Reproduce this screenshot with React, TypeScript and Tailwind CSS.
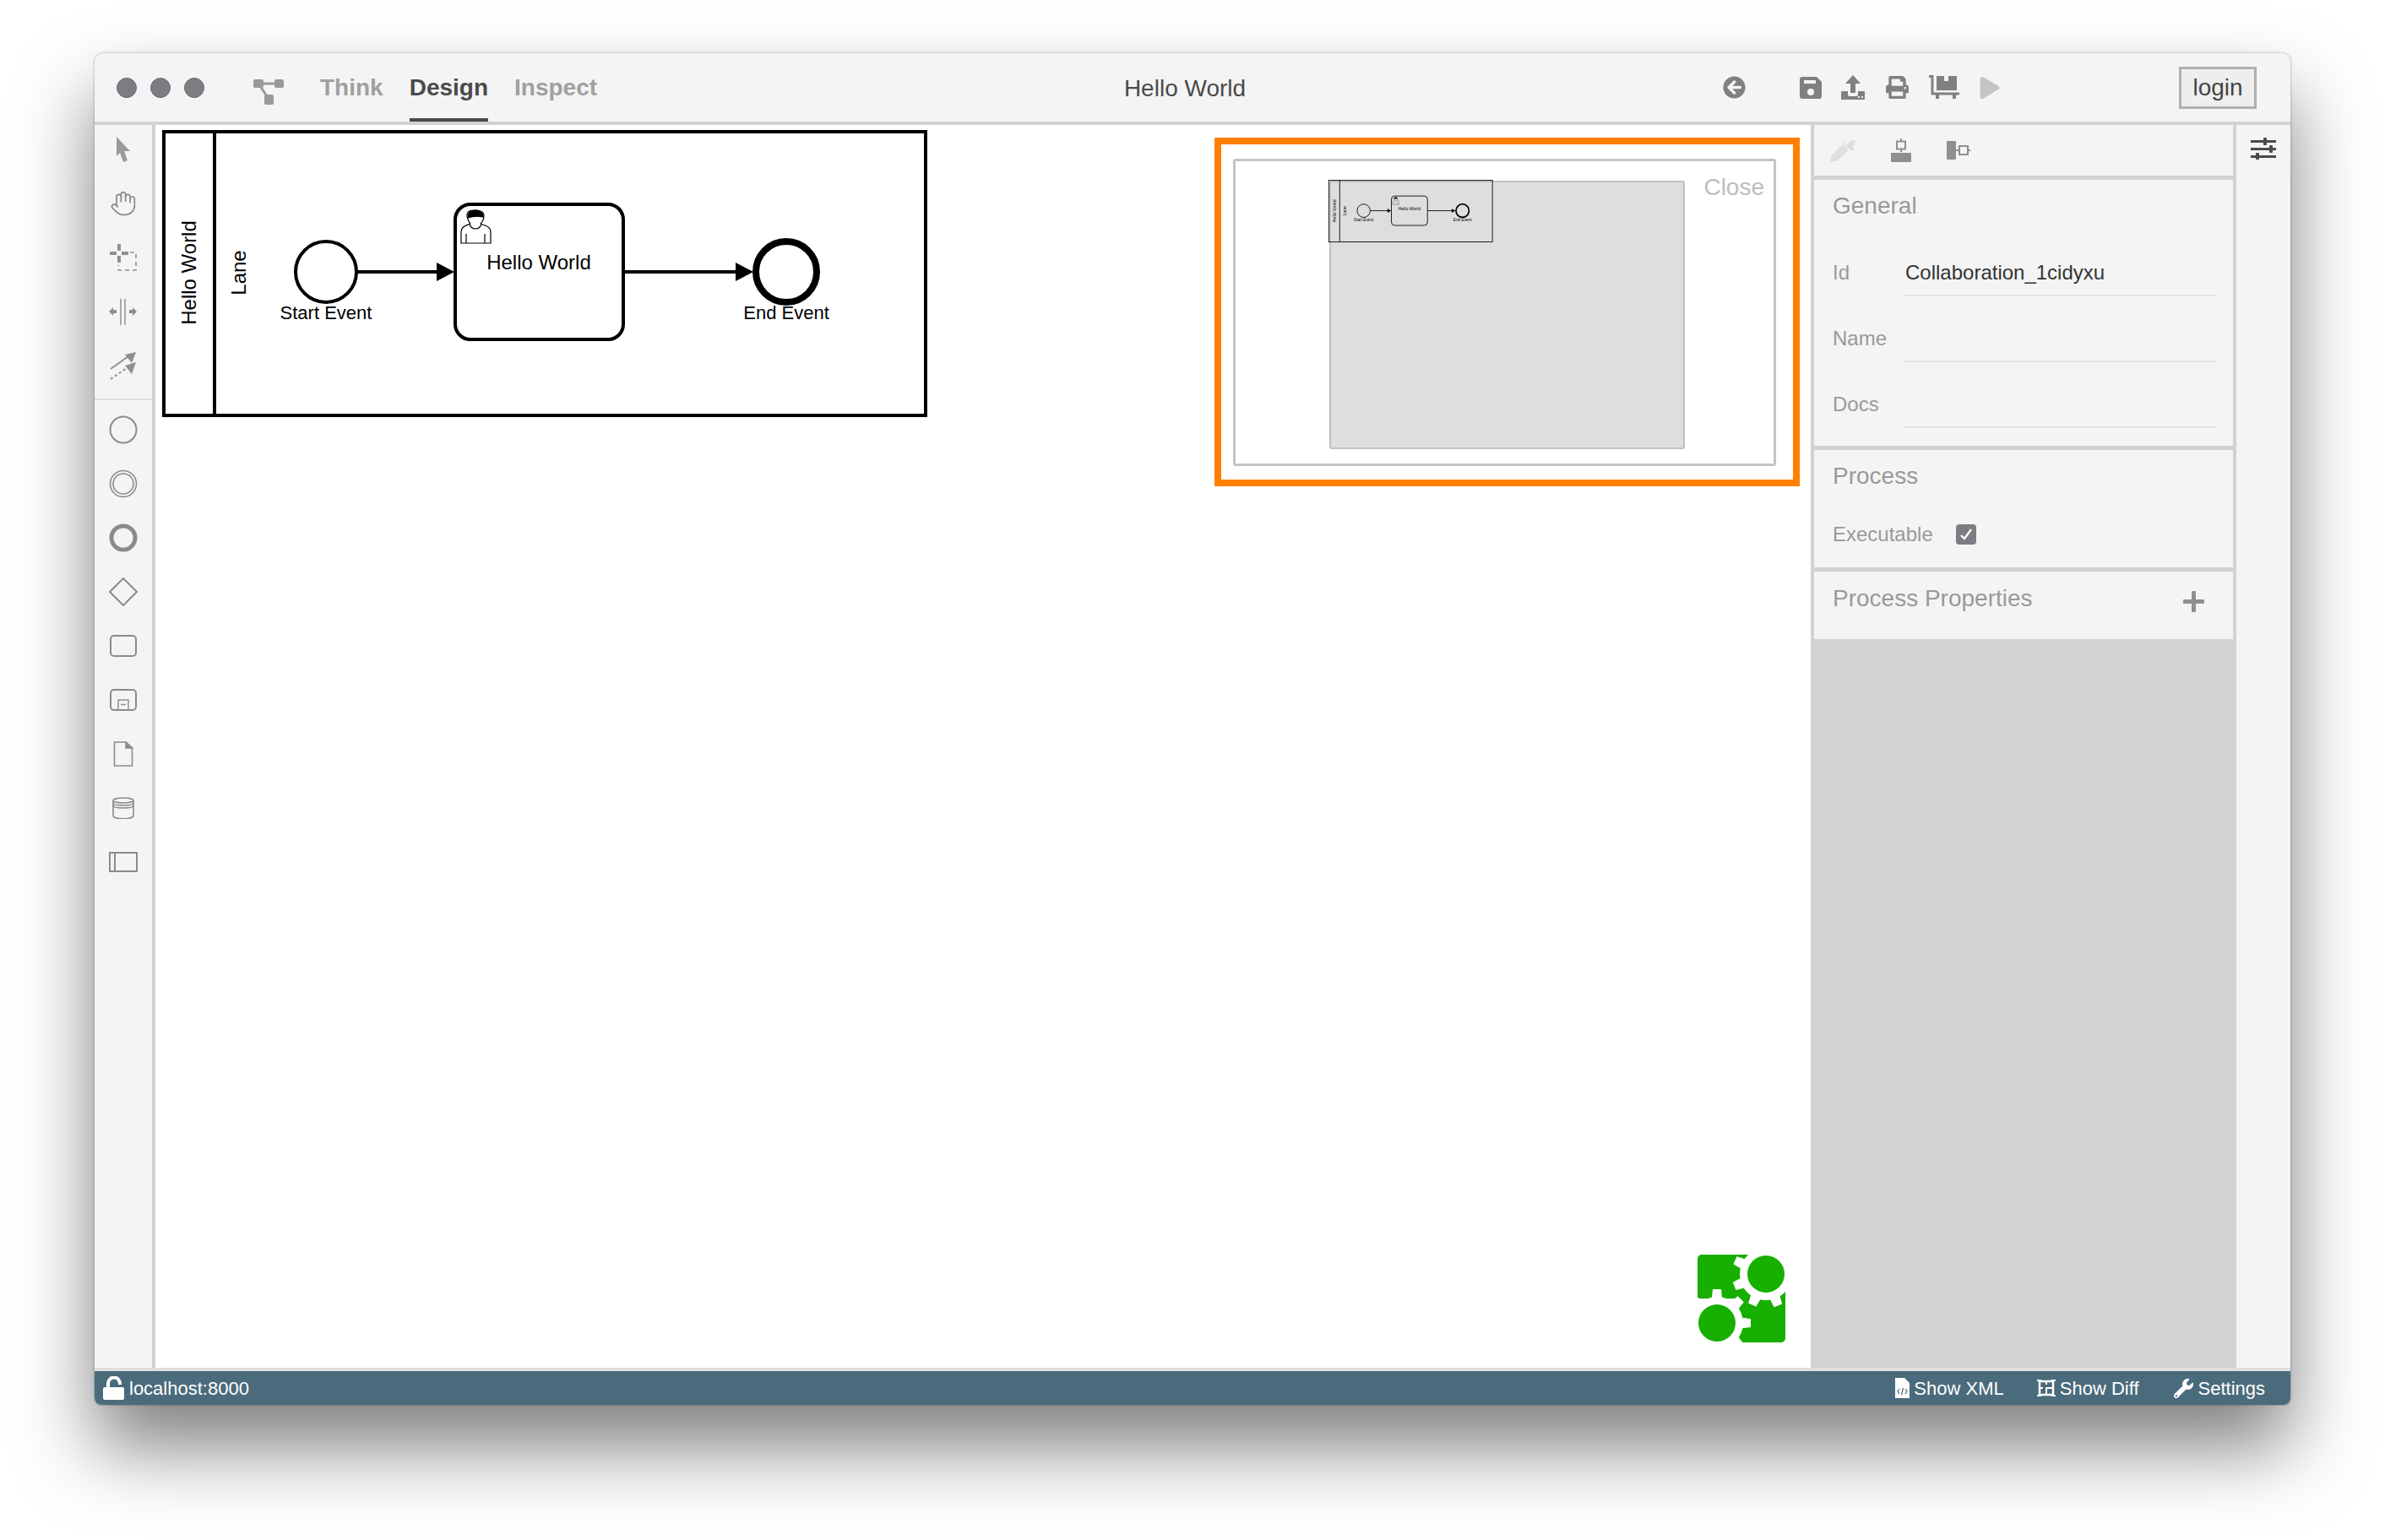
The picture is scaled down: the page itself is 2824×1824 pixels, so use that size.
import { FaArrowCircleLeft, FaPrint, FaWrench, FaPlay } from "react-icons/fa";
import { Hand } from "lucide-react";

const font = "font-['Liberation_Sans',Arial,sans-serif]";

function Diagram({ fill }: { fill: string }) {
  return (
    <g fontFamily="Liberation Sans, Arial, sans-serif" fill="none" stroke="#000">
      <rect x="194" y="156" width="902" height="336" strokeWidth="4" />
      <path d="M254 156V492" strokeWidth="4" />
      <circle cx="386" cy="322" r="36" fill={fill} strokeWidth="4" />
      <path d="M423 322H520" strokeWidth="4" />
      <path d="M517 311L538 322L517 333Z" fill="#000" stroke="none" />
      <rect x="539" y="242" width="199" height="160" rx="18" fill={fill} strokeWidth="4" />
      <path d="M739 322H876" strokeWidth="4" />
      <path d="M871 311L892 322L871 333Z" fill="#000" stroke="none" />
      <circle cx="931" cy="322" r="36" fill={fill} strokeWidth="8" />
      <g strokeWidth="1.2" fill={fill}>
        <path d="M546 288V275C546 268 552 267 557 265C554 261 553 257 553 255C553 249 558 249 563 249C568 249 573 250 573 255C573 258 572 262 569 265C574 267 581 268 581 275V288Z" />
        <path d="M556 265C558 273 568 273 570 265" />
        <path d="M552 288V277M574 288V277" />
        <path d="M554 258C554 250 558 249 563 249C568 249 572 251 572 257C568 256 560 256 554 258Z" fill="#000" />
      </g>
      <g fill="#000" stroke="none" fontSize="22" textAnchor="middle">
        <text x="386" y="378">Start Event</text>
        <text x="931" y="378">End Event</text>
        <text x="638" y="319" fontSize="24">Hello World</text>
        <text transform="translate(232 323) rotate(-90)" fontSize="24">Hello World</text>
        <text transform="translate(291 323) rotate(-90)" fontSize="24">Lane</text>
      </g>
    </g>
  );
}

function GreenLogo() {
  const angles = [0, 45, 90, 135, 180, 225, 270, 315];
  return (
    <svg viewBox="0 0 104 104" className="absolute left-[1826px] top-[1338px] h-[104px] w-[104px]">
      <rect width="104" height="104" rx="5" fill="#17af00" />
      <rect x="60" width="44" height="44" fill="#fff" />
      <rect y="52" width="48" height="52" fill="#fff" />
      <g fill="#fff">
        <circle cx="81" cy="23" r="31" />
        {angles.map((a) => (
          <path key={a} d="M76 -17H86L88 0H74Z" transform={`rotate(${a + 24} 81 23)`} />
        ))}
        <circle cx="23" cy="81" r="31" />
        {angles.map((a) => (
          <path key={a} d="M18 41H28L30 58H16Z" transform={`rotate(${a} 23 81)`} />
        ))}
      </g>
      <circle cx="81" cy="23" r="22" fill="#17af00" />
      <circle cx="23" cy="81" r="22" fill="#17af00" />
    </svg>
  );
}

function ToolItem({ children }: { children: React.ReactNode }) {
  return <div className="flex h-[64px] w-full items-center justify-center">{children}</div>;
}

function LeftToolbar() {
  const stroke = "#8b8b8b";
  return (
    <div className="flex w-[72px] flex-col border-r-4 border-[#d3d1d2] bg-[#f4f4f4]">
      <div className="-mt-[3px]">
        <ToolItem>
          <svg width="20" height="30" viewBox="0 0 20 30"><path d="M2 0L18 17H11L15 28L10 30L6 19L2 23Z" fill="#9a9a9a" /></svg>
        </ToolItem>
        <ToolItem>
          <Hand size={32} strokeWidth={1.3} color="#8b8b8b" />
        </ToolItem>
        <ToolItem>
          <svg width="32" height="32" viewBox="0 0 32 32" fill="none">
            <path d="M11 0V8M11 14V22M0 11H8M14 11H22" stroke="#8f8f8f" strokeWidth="4" />
            <path d="M24 10H31V31H10V25" stroke="#8f8f8f" strokeWidth="1.6" strokeDasharray="5 4" />
          </svg>
        </ToolItem>
        <ToolItem>
          <svg width="34" height="33" viewBox="0 0 34 33" fill="#8f8f8f">
            <path d="M14 1V32M19 1V32" stroke="#8f8f8f" strokeWidth="1.5" />
            <path d="M0 16L5 11V14H9V18H5V21Z M33 16L28 11V14H24V18H28V21Z" />
          </svg>
        </ToolItem>
        <ToolItem>
          <svg width="32" height="33" viewBox="0 0 32 33" fill="none">
            <path d="M1 20L22 5" stroke="#8f8f8f" strokeWidth="2" />
            <path d="M31 0L26 13L18 3Z" fill="#8f8f8f" />
            <path d="M1 32L20 19" stroke="#8f8f8f" strokeWidth="2" strokeDasharray="3 3" />
            <path d="M31 12L26 26L18 16Z" fill="#8f8f8f" />
          </svg>
        </ToolItem>
      </div>
      <div className="mt-[7px] mb-[3px] h-[2px] w-full bg-[#dedede]" />
      <ToolItem>
        <svg width="34" height="34" viewBox="0 0 34 34" fill="none" stroke={stroke} strokeWidth="2"><circle cx="17" cy="17" r="15.5" /></svg>
      </ToolItem>
      <ToolItem>
        <svg width="34" height="34" viewBox="0 0 34 34" fill="none" stroke={stroke} strokeWidth="1.6"><circle cx="17" cy="17" r="15.5" /><circle cx="17" cy="17" r="12" /></svg>
      </ToolItem>
      <ToolItem>
        <svg width="34" height="34" viewBox="0 0 34 34" fill="none" stroke={stroke} strokeWidth="5"><circle cx="17" cy="17" r="14" /></svg>
      </ToolItem>
      <ToolItem>
        <svg width="34" height="34" viewBox="0 0 34 34" fill="none" stroke={stroke} strokeWidth="2"><path d="M17 1L33 17L17 33L1 17Z" /></svg>
      </ToolItem>
      <ToolItem>
        <svg width="32" height="26" viewBox="0 0 32 26" fill="none" stroke={stroke} strokeWidth="2"><rect x="1" y="1" width="30" height="24" rx="4" /></svg>
      </ToolItem>
      <ToolItem>
        <svg width="32" height="26" viewBox="0 0 32 26" fill="none" stroke={stroke} strokeWidth="2">
          <rect x="1" y="1" width="30" height="24" rx="4" />
          <path d="M10 25V13H22V25M13 18.5H19" strokeWidth="1.4" />
        </svg>
      </ToolItem>
      <ToolItem>
        <svg width="24" height="30" viewBox="0 0 24 30" fill="none" stroke={stroke} strokeWidth="1.6">
          <path d="M1.5 1H15L22.5 8V29H1.5Z" />
          <path d="M15 1V8H22.5Z" fill="#8b8b8b" />
        </svg>
      </ToolItem>
      <ToolItem>
        <svg width="26" height="26" viewBox="0 0 26 26" fill="none" stroke={stroke} strokeWidth="1.6">
          <path d="M1 4V22C1 27 25 27 25 22V4" />
          <ellipse cx="13" cy="4" rx="12" ry="3" />
          <path d="M1 7C1 11 25 11 25 7M1 10C1 14 25 14 25 10" />
        </svg>
      </ToolItem>
      <ToolItem>
        <svg width="34" height="24" viewBox="0 0 34 24" fill="none" stroke={stroke} strokeWidth="2">
          <rect x="1" y="1" width="32" height="22" />
          <path d="M7 1V23" />
        </svg>
      </ToolItem>
    </div>
  );
}

function PanelRow({ label, value }: { label: string; value?: string }) {
  return (
    <div className="flex h-[78px] items-center pl-[22px] pr-[20px] pt-[1px]">
      <span className="w-[84px] text-[24px] text-[#999]">{label}</span>
      <div className="flex h-[78px] flex-1 items-center pt-[1px]">
        <div className="flex h-[40px] w-full translate-y-[8px] items-center border-b-2 border-[#e4e4e4] pb-[14px] pl-[2px] text-[24px] leading-none text-[#333]">
          {value}
        </div>
      </div>
    </div>
  );
}

function RightPanel() {
  return (
    <div className="flex w-[504px] flex-col bg-[#d3d1d2] px-[4px]">
      <div className="flex h-[60px] items-center bg-[#f4f4f4] pl-[19px]">
        <svg width="30" height="28" viewBox="0 0 30 28" fill="#dedede">
          <path d="M0 28L2 20L15 7L22 14L9 26Z" />
          <path d="M16 5L19 8L23 4C25 1 29 1 30 4C30 7 28 8 26 10L29 12L26 15L14 5L17 2Z" />
        </svg>
        <svg className="ml-[42px]" width="24" height="28" viewBox="0 0 24 28" fill="#8f8f8f">
          <path d="M12 0V3M12 13V16" stroke="#8f8f8f" strokeWidth="2" />
          <rect x="7" y="3.5" width="10" height="9" fill="none" stroke="#8f8f8f" strokeWidth="2" />
          <rect y="17" width="24" height="11" rx="1" />
        </svg>
        <svg className="ml-[42px]" width="28" height="22" viewBox="0 0 28 22" fill="#8f8f8f">
          <rect width="11" height="22" rx="1" />
          <path d="M11 11H15M25 11H28" stroke="#8f8f8f" strokeWidth="2" />
          <rect x="15" y="6" width="10" height="10" fill="none" stroke="#8f8f8f" strokeWidth="2" />
        </svg>
      </div>
      <div className="mt-[5px] h-[315px] bg-[#f4f4f4]">
        <div className="flex h-[62px] items-center pl-[22px] text-[28px] text-[#999]">General</div>
        <div className="h-[8px]" />
        <PanelRow label="Id" value="Collaboration_1cidyxu" />
        <PanelRow label="Name" />
        <PanelRow label="Docs" />
      </div>
      <div className="mt-[5px] h-[139px] bg-[#f4f4f4]">
        <div className="flex h-[61px] items-center pl-[22px] text-[28px] text-[#999]">Process</div>
        <div className="mt-[15px] flex h-[48px] items-center pl-[22px] text-[24px] text-[#999]">
          Executable
          <span className="ml-[27px] flex h-[24px] w-[24px] items-center justify-center rounded-[4px] bg-[#7d7c82]">
            <svg width="16" height="14" viewBox="0 0 16 14" fill="none" stroke="#fff" strokeWidth="2.4"><path d="M2 8L6 12L14 1" /></svg>
          </span>
        </div>
      </div>
      <div className="mt-[5px] flex h-[80px] items-start justify-between bg-[#f4f4f4] pl-[22px] pr-[34px] pt-[8px] text-[28px] text-[#999]">
        <span className="leading-[48px]">Process Properties</span>
        <svg className="mt-[15px]" width="25" height="25" viewBox="0 0 25 25" fill="#8f8f8f"><rect y="10" width="25" height="5" rx="1" /><rect x="10" width="5" height="25" rx="1" /></svg>
      </div>
    </div>
  );
}

export default function App() {
  return (
    <div className={`${font} min-h-screen bg-white pl-[112px] pt-[63px]`}>
      <div className="flex h-[1601px] w-[2600px] flex-col overflow-hidden rounded-t-[10px] rounded-b-[8px] bg-[#f4f4f4] shadow-[0_50px_90px_rgba(0,0,0,0.5),0_0_3px_rgba(0,0,0,0.35)]">
        <header className="flex h-[85px] shrink-0 items-stretch border-b-4 border-[#d3d1d2]">
          <div className="flex w-[1000px] items-center pl-[26px]">
            <div className="flex gap-[16px]">
              <span className="h-[24px] w-[24px] rounded-full border border-[#6a6a6e] bg-[#7d7c82]" />
              <span className="h-[24px] w-[24px] rounded-full border border-[#6a6a6e] bg-[#7d7c82]" />
              <span className="h-[24px] w-[24px] rounded-full border border-[#6a6a6e] bg-[#7d7c82]" />
            </div>
            <svg className="ml-[58px] mt-[10px]" width="36" height="30" viewBox="0 0 36 30" fill="#999">
              <rect width="12" height="10" rx="2" />
              <rect x="25" y="0" width="11" height="10" rx="2" />
              <rect x="13" y="18" width="11" height="12" rx="2" />
              <path d="M10 5H26M8 8L16 20" stroke="#999" strokeWidth="3" />
            </svg>
            <nav className="ml-[43px] flex h-full items-center gap-[31px] text-[28px] font-bold text-[#a0a0a0]">
              <span>Think</span>
              <span className="flex h-full items-center border-b-4 border-[#4a4a4a] pt-[4px] text-[#4a4a4a]">Design</span>
              <span>Inspect</span>
            </nav>
          </div>
          <div className="flex-1 pt-[1px] text-center text-[28px] leading-[81px] text-[#4a4a4a]">Hello World</div>
          <div className="flex w-[1018px] items-center pr-[40px]">
            <FaArrowCircleLeft className="ml-[346px] h-[27px] w-[27px] text-[#808080]" />
            <svg className="ml-[64px]" width="26" height="26" viewBox="0 0 26 26" fill="#808080">
              <path d="M3 0H20L26 6V23C26 25 25 26 23 26H3C1 26 0 25 0 23V3C0 1 1 0 3 0ZM5 4V8H19V4ZM13 14A4 4 0 1 0 13 22A4 4 0 1 0 13 14Z" fillRule="evenodd" />
            </svg>
            <svg className="ml-[23px]" width="28" height="29" viewBox="0 0 28 29" fill="#808080">
              <path d="M14 0L23 10H17V21H11V10H5Z" />
              <path d="M1 19H8V23C8 24 9 25 10 25H18C19 25 20 24 20 23V19H27C28 19 28 20 28 20V28C28 29 27 29 27 29H1C0 29 0 28 0 28V20C0 20 0 19 1 19Z" />
              <rect x="20" y="25" width="2" height="2" fill="#f4f4f4" />
              <rect x="24" y="25" width="2" height="2" fill="#f4f4f4" />
            </svg>
            <FaPrint className="ml-[25px] h-[27px] w-[27px] text-[#808080]" />
            <svg className="ml-[24px]" width="36" height="29" viewBox="0 0 36 29" fill="none">
              <path d="M0 1.5H4V22H36" stroke="#808080" strokeWidth="3" />
              <path d="M9 1H18V7H23V1H33V18H9Z" fill="#808080" />
              <path d="M10 23V28M30 23V28" stroke="#808080" strokeWidth="4" />
            </svg>
            <FaPlay className="ml-[23px] h-[26px] w-[26px] text-[#c4c4c4]" />
            <div className="ml-[211px] flex h-[50px] w-[92px] items-center justify-center border-[3px] border-[#b0b0b0] bg-[#eee] text-[28px] text-[#444]">
              login
            </div>
          </div>
        </header>

        <div className="flex min-h-0 flex-1">
          <LeftToolbar />
          <main className="relative flex-1 bg-white">
            <svg viewBox="184 148 930 350" className="absolute left-0 top-0 h-[350px] w-[930px]">
              <Diagram fill="#fff" />
            </svg>
            <div className="absolute left-[1254px] top-[15px] h-[413px] w-[693px] border-8 border-[#ff7f00] bg-white pb-[16px] pl-[14px] pr-[20px] pt-[17px]">
              <div className="relative h-full w-full rounded-[3px] border-[3px] border-[#c4c4c4]">
                <div className="absolute left-[111px] top-[23px] h-[318px] w-[421px] rounded-[3px] border-2 border-[#c0c0c0] bg-[#dedede]" />
                <svg viewBox="192 154 908 340" preserveAspectRatio="none" className="absolute left-[110px] top-[22px] h-[74px] w-[195px]">
                  <Diagram fill="none" />
                </svg>
                <span className="absolute right-[11px] top-[15px] text-[28px] leading-[32px] text-[#bdbdbd]">Close</span>
              </div>
            </div>
            <GreenLogo />
          </main>
          <RightPanel />
          <div className="flex w-[64px] justify-center bg-[#f4f4f4] pt-[15px]">
            <svg width="30" height="26" viewBox="0 0 30 26" fill="#4a4a4a">
              <rect y="3" width="30" height="3" />
              <rect y="12" width="30" height="3" />
              <rect y="21" width="30" height="3" />
              <rect x="15" width="4" height="9" rx="1" />
              <rect x="22" y="9" width="4" height="9" rx="1" />
              <rect x="6" y="18" width="4" height="8" rx="1" />
            </svg>
          </div>
        </div>

        <footer className="flex h-[44px] shrink-0 items-center justify-between border-t-4 border-[#e0e0e0] bg-[#4a6b7c] pl-[10px] pr-[30px] text-[22px] text-white">
          <div className="flex items-center gap-[6px]">
            <svg width="25" height="28" viewBox="0 0 25 28" fill="#fff">
              <path d="M6 15V8.5A7 7 0 0 1 20 8.5V10" fill="none" stroke="#fff" strokeWidth="4" />
              <rect y="13" width="25" height="15" rx="2" />
            </svg>
            <span>localhost:8000</span>
          </div>
          <div className="flex items-center">
            <svg width="17" height="24" viewBox="0 0 17 24" fill="#fff">
              <path d="M0 0H11L17 6V24H0Z" />
              <path d="M5 13L3 16L5 19M12 13L14 16L12 19M9.5 12L7.5 20" fill="none" stroke="#4a6b7c" strokeWidth="1.2" />
            </svg>
            <span className="ml-[5px]">Show XML</span>
            <svg className="ml-[39px]" width="22" height="22" viewBox="0 0 22 22" fill="none" stroke="#fff" strokeWidth="2">
              <rect x="3" y="3" width="16" height="16" strokeWidth="2.5" />
              <path d="M11 19V11H19M3 11H7M11 3V7" />
              <path d="M0 2H5M0 20H5M17 2H22M17 20H22" strokeWidth="2" />
            </svg>
            <span className="ml-[5px]">Show Diff</span>
            <FaWrench className="ml-[41px] h-[23px] w-[23px]" />
            <span className="ml-[6px]">Settings</span>
          </div>
        </footer>
      </div>
    </div>
  );
}
